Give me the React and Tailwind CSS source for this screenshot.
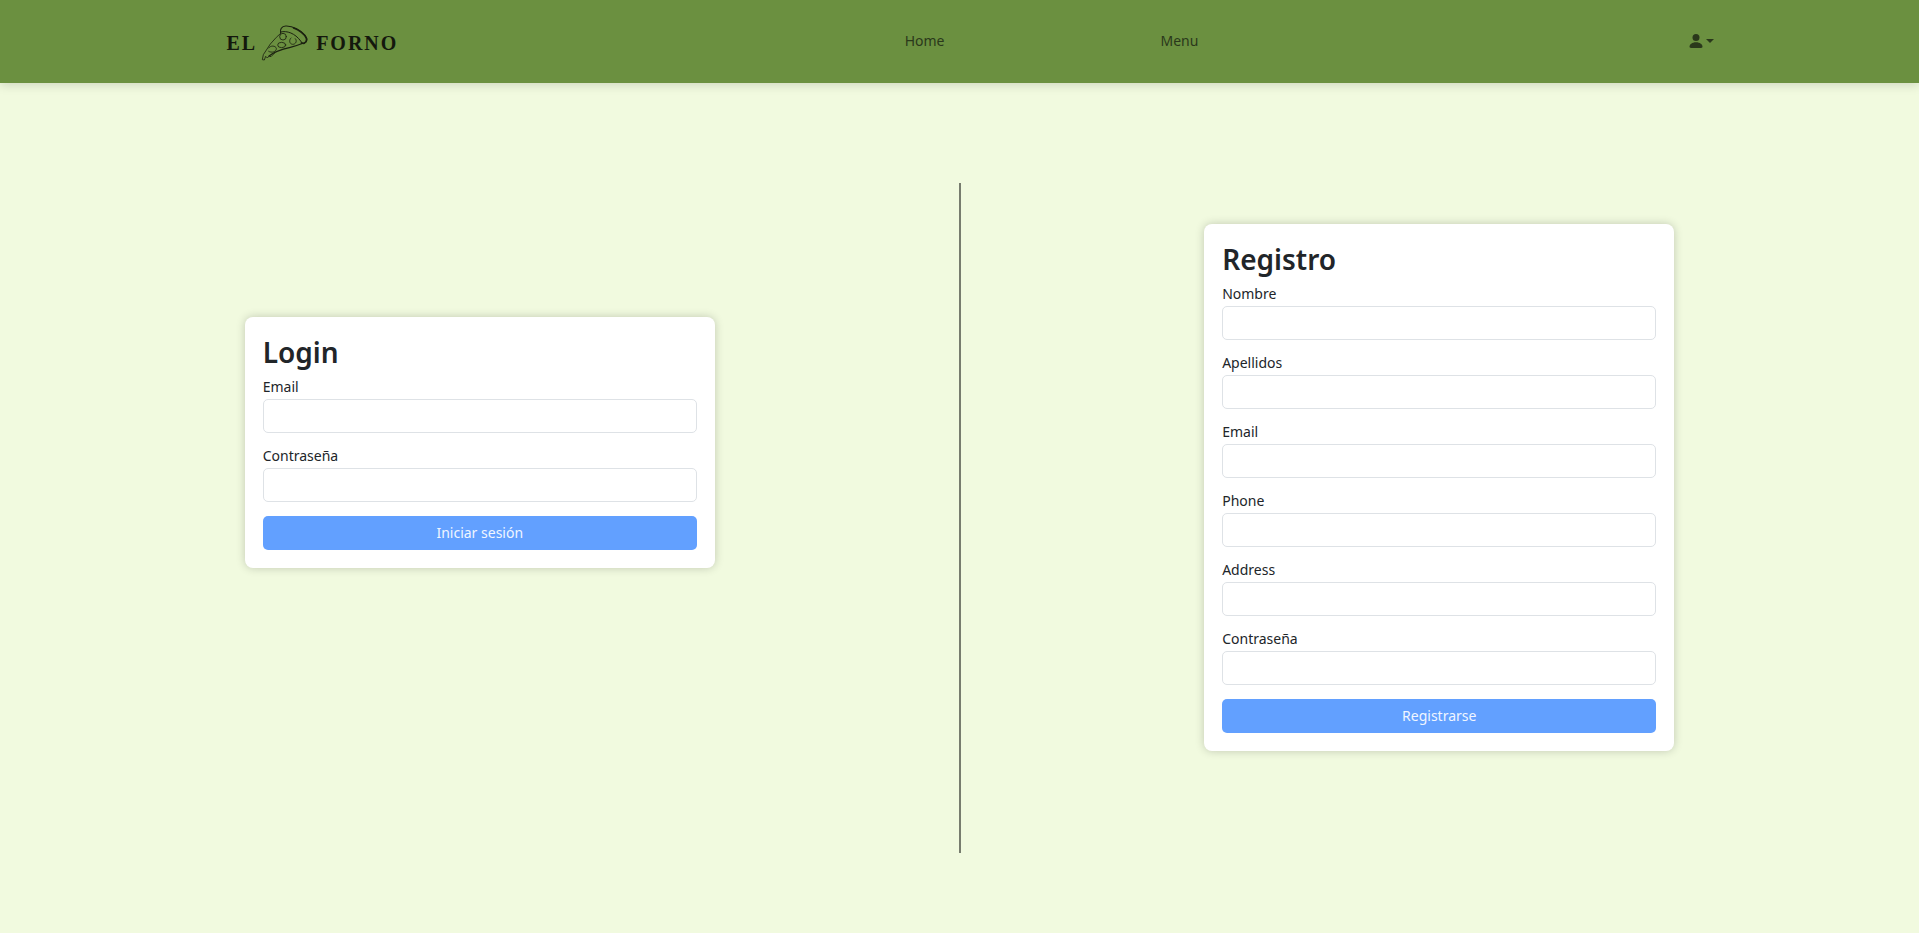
import React from "react";

function PizzaIcon() {
  return (
    <svg
      viewBox="20 15 141 108"
      className="h-9 w-[47px]"
      fill="none"
      stroke="#1b2110"
      strokeLinecap="round"
      strokeLinejoin="round"
      aria-hidden="true"
    >
      <path strokeWidth="3.5" d="M79 39C76 28 82 19 94 18C116 17 140 31 152 46C159 55 160 66 150 70" />
      <path strokeWidth="5" d="M118 24C134 30 152 43 156 55C158 62 155 67 149 70L141 69" />
      <path strokeWidth="3" d="M79 36C98 31 122 40 139 63L144 70" />
      <path strokeWidth="2.5" d="M79 40L66 52L48 72L27 104L24 119L30 120L34 109L39 114L44 108L50 110L60 100" />
      <path strokeWidth="3.5" d="M44 108C62 93 86 87 108 82C124 78 136 74 146 70" />
      <g strokeWidth="2.5">
        <circle cx="86" cy="50" r="10" />
        <path d="M110 54C103 60 105 72 115 73C125 73 129 62 123 56" />
        <ellipse cx="82" cy="75" rx="12" ry="8" />
        <path d="M43 84C49 75 64 77 66 85C67 95 52 100 43 94" />
      </g>
    </svg>
  );
}

function Navbar() {
  return (
    <header className="relative bg-[#6b9040] shadow-[0_2px_10px_rgba(0,0,0,0.15)]">
      <nav className="flex h-[83px] items-center justify-between pr-[10.7%] pb-[2px] pl-[11.8%] text-[#2a381b]">
        <a
          href="#inicio"
          className="flex w-[188px] items-center gap-1 pt-1 font-['Liberation_Serif',serif] text-[20px] leading-9 font-bold tracking-widest text-[#14180d]"
        >
          <span>EL</span>
          <PizzaIcon />
          <span className="pl-1">FORNO</span>
        </a>
        <div className="flex gap-[216px]">
          <a href="#home">Home</a>
          <a href="#menu">Menu</a>
        </div>
        <button type="button" aria-label="Usuario" className="flex items-center gap-[3px]">
          <svg viewBox="0 0 14 14" className="size-[14px]" fill="currentColor" aria-hidden="true">
            <circle cx="7" cy="3.5" r="3.5" />
            <path d="M2 14C1 14 0.5 13.5 0.5 12.8C0.5 10.5 3 8.3 7 8.3S13.5 10.5 13.5 12.8C13.5 13.5 13 14 12 14Z" />
          </svg>
          <svg viewBox="0 0 8 4" className="h-1 w-2" fill="currentColor" aria-hidden="true">
            <path d="M0 0H8L4 4Z" />
          </svg>
        </button>
      </nav>
    </header>
  );
}

function Field({ id, label, type }) {
  return (
    <div className="mb-[14px]">
      <label htmlFor={id} className="mb-[3px] block leading-[18px]">
        {label}
      </label>
      <input
        id={id}
        type={type}
        className="block h-[34px] w-full rounded-[5px] border border-[#dee2e6] bg-white px-3"
      />
    </div>
  );
}

function FormCard({ title, fields, action, prefix }) {
  return (
    <form
      className="w-[49%] rounded-lg bg-white p-[18px] shadow-[0_0_10px_rgba(0,0,0,0.2)]"
      onSubmit={(e) => e.preventDefault()}
    >
      <h2 className="mb-[9px] text-[28px] leading-[34px] font-semibold">{title}</h2>
      {fields.map(([name, label, type]) => (
        <Field key={name} id={`${prefix}-${name}`} label={label} type={type} />
      ))}
      <button
        type="submit"
        className="block h-[34px] w-full rounded-[5px] bg-[#62a0ff] pb-[2px] text-[#f0f6ff]"
      >
        {action}
      </button>
    </form>
  );
}

const loginFields = [
  ["email", "Email", "email"],
  ["password", "Contraseña", "password"],
];

const registerFields = [
  ["name", "Nombre", "text"],
  ["surname", "Apellidos", "text"],
  ["email", "Email", "email"],
  ["phone", "Phone", "tel"],
  ["address", "Address", "text"],
  ["password", "Contraseña", "password"],
];

export default function App() {
  return (
    <div className="flex min-h-screen flex-col bg-[#f1fadf] font-['Noto_Sans',sans-serif] text-[14px] leading-[21px] text-[#212529]">
      <Navbar />
      <main className="flex flex-1">
        <section className="flex flex-1 items-start justify-center pt-[234px]">
          <FormCard title="Login" fields={loginFields} action="Iniciar sesión" prefix="login" />
        </section>
        <div className="-mx-px mt-[100px] mb-20 w-[2px] bg-[#777c6e]" />
        <section className="flex flex-1 items-start justify-center pt-[141px]">
          <FormCard title="Registro" fields={registerFields} action="Registrarse" prefix="register" />
        </section>
      </main>
    </div>
  );
}
